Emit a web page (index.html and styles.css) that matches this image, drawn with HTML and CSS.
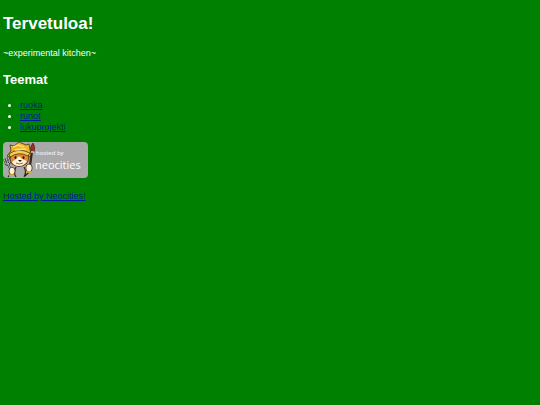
FILE: index.html
```html
<!DOCTYPE html>
<html lang="fi">
<head>
<meta charset="utf-8">
<title>Tervetuloa!</title>
<link rel="stylesheet" href="styles.css">
</head>
<body>
<h1>Tervetuloa!</h1>
<p>~experimental kitchen~</p>
<h2>Teemat</h2>
<ul>
<li><a href="#ruoka">ruoka</a></li>
<li><a href="#runot">runot</a></li>
<li><a href="#lukuprojekti">lukuprojekti</a></li>
</ul>
<a class="badge" href="#neocities" aria-label="Neocities">
<svg width="85" height="37" viewBox="0 0 85 37">
<rect width="85" height="36" rx="4" fill="#a9a9a9"/>
<g stroke="#302410" stroke-width="0.7" stroke-linejoin="round">
<path d="M8 9 7 3 11 4 16 0 23 3 26 2 27 8 29 14 25 15 8 16 4 14Z" fill="#efb52c"/>
<path d="M8 11Q6 18 9 22Q16 27 23 22Q27 18 25 11Q16 7 8 11Z" fill="#e68a35"/>
<path d="M13 17Q16 12 19 17L24 19Q21 24 16 24 11 24 9 20Z" fill="#fff1d5" stroke="none"/>
<path d="M6 12Q15 5 27 11L25 14Q16 9 7 15Z" fill="#f7cf50"/>
</g>
<path d="M10 5 15 3 21 5M12 8 23 7" fill="none" stroke="#ffe580" stroke-width="1.3"/>
<g fill="#201b17"><ellipse cx="12.5" cy="15.5" rx="1" ry="1.5"/><ellipse cx="20.5" cy="15.5" rx="1" ry="1.5"/><path d="M15 18h4l-2 2z"/></g>
<path d="M13 21Q16 23 20 21" fill="none" stroke="#5d3519" stroke-width="0.7"/>
<path d="M1 17 3 22Q5 24 7 20L5 15M3 16 5 22 10 32" fill="none" stroke="#333" stroke-width="2"/>
<path d="M1 17 3 22Q5 23 7 20L5 15M3 16 5 22 10 32" fill="none" stroke="#ddd" stroke-width="0.8"/>
<path d="M29 9 27 24" stroke="#392719" stroke-width="2.2"/>
<path d="M30 1Q26 5 28 10H31Q33 5 30 1Z" fill="#9d3025" stroke="#3c201a" stroke-width="0.6"/>
<path d="M28 10h3" stroke="#ddd" stroke-width="1.4"/>
<path d="M8 31 5 35M26 30 22 34M13 25Q10 31 13 35M21 25Q24 30 21 35" fill="none" stroke="#302410" stroke-width="1.2"/>
<g fill="#fff0d6" stroke="#453018" stroke-width="0.8"><ellipse cx="9" cy="29" rx="3" ry="3.8"/><ellipse cx="26" cy="26" rx="3.2" ry="4"/></g>
<path d="M6 33h5M23 30h5" stroke="#e9b22c" stroke-width="1.5"/>
<text class="hosted" x="33" y="13">hosted by</text>
<text class="brand" x="32" y="27">neocities</text>
</svg>
</a>
<p><a href="#hosted">Hosted by Neocities!</a></p>
</body>
</html>
```
FILE: styles.css
```css
body {
  margin: 13px 3px;
  background: #008000;
  color: #fff;
  font: 9px/11px "Liberation Sans", Arial, sans-serif;
}
h1 { margin: 0 0 13px; font-size: 17px; line-height: 22px; }
h2 { margin: 12px 0; font-size: 13px; line-height: 17px; }
p { margin: 12px 0; }
ul { margin: 12px 0 9px; padding-left: 17px; }
a { color: #0018a0; }
.badge { display: block; width: 85px; }
.badge svg { display: block; }
.hosted { fill: #fff; font: 6px "Open Sans", sans-serif; }
.brand { fill: #fff; font: 11px "Open Sans", sans-serif; }
```
